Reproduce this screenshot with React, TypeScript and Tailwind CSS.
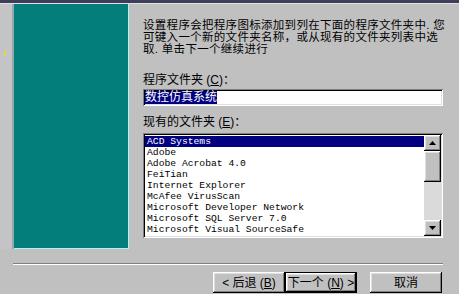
import React from 'react';

const raised =
  'shadow-[inset_-1px_-1px_0_#000,inset_1px_1px_0_#fff,inset_-2px_-2px_0_#808080,inset_2px_2px_0_#dfdfdf]';
const sunken =
  'shadow-[inset_1px_1px_0_#808080,inset_-1px_-1px_0_#fff,inset_2px_2px_0_#000,inset_-2px_-2px_0_#dfdfdf]';

const folders = [
  'ACD Systems',
  'Adobe',
  'Adobe Acrobat 4.0',
  'FeiTian',
  'Internet Explorer',
  'McAfee VirusScan',
  'Microsoft Developer Network',
  'Microsoft SQL Server 7.0',
  'Microsoft Visual SourceSafe',
];

const cjk = { fontFamily: '"Liberation Sans", "Noto Sans CJK SC", sans-serif' };

const Arrow: React.FC<{ up?: boolean }> = ({ up }) => (
  <svg width="7" height="4" viewBox="0 0 7 4">
    <path d={up ? 'M3.5 0 L7 4 L0 4 Z' : 'M0 0 L7 0 L3.5 4 Z'} fill="#000" />
  </svg>
);

const Button: React.FC<{ children: React.ReactNode; isDefault?: boolean; className?: string }> = ({
  children,
  isDefault,
  className = '',
}) => (
  <div className={`${className} w-[72px] h-[21px] ${isDefault ? 'border border-black' : ''}`}>
    <div className={`w-full h-full bg-[#c0c0c0] ${raised} flex items-center justify-center text-[12px] leading-none text-black`}>
      {children}
    </div>
  </div>
);

export default function App() {
  return (
    <div className="w-[459px] h-[294px] bg-[#c0c0c0] overflow-hidden flex flex-col" style={cjk}>
      <div className="h-[3px] bg-[#3d3f58]" />
      <div className="h-[1px] bg-[#dfe0ea]" />

      <div className="flex h-[245px]">
        <div className="w-[14px] border-r-2 border-[#9aa6ae] bg-[#c4c4c6] pt-[47px] pl-[4px]">
          <div className="w-[2px] h-[5px] bg-[#e8d24a]" />
        </div>
        <div className="w-[115px] bg-[#037e7a] border-r border-b border-[#aef3f0]" />

        <div className="w-[314px] pl-[14px] pt-[15px] flex flex-col text-black">
          <div className="text-[11.5px] leading-[12px] tracking-[0.3px] whitespace-nowrap">
            <div className="h-[12px]">设置程序会把程序图标添加到列在下面的程序文件夹中. 您</div>
            <div className="h-[12px]">可键入一个新的文件夹名称，或从现有的文件夹列表中选</div>
            <div className="h-[12px]">取. 单击下一个继续进行</div>
          </div>

          <div className="mt-[19px] text-[12px] leading-[12px]">
            程序文件夹 (<span className="underline">C</span>)：
          </div>
          <div className={`mt-[3px] h-[17px] w-[300px] bg-white ${sunken} flex items-center pl-[2px]`}>
            <span className="bg-[#000080] text-white text-[12px] leading-[13px]">数控仿真系统</span>
          </div>

          <div className="mt-[10px] text-[12px] leading-[12px]">
            现有的文件夹 (<span className="underline">E</span>)：
          </div>
          <div className={`mt-[5px] h-[105px] w-[300px] bg-white ${sunken} p-[2px] flex`}>
            <div
              className="flex-1 flex flex-col pt-[1px] overflow-hidden"
              style={{ fontFamily: '"Liberation Mono", monospace' }}
            >
              {folders.map((f, i) => (
                <div
                  key={f}
                  className={`h-[11px] text-[9.7px] leading-[11px] pl-[2px] whitespace-nowrap ${
                    i === 0 ? 'bg-[#000080] text-white' : 'text-black'
                  }`}
                >
                  {f}
                </div>
              ))}
            </div>
            <div className="w-[17px] flex flex-col">
              <div className={`h-[16px] bg-[#c0c0c0] ${raised} flex items-center justify-center`}>
                <Arrow up />
              </div>
              <div className={`h-[31px] bg-[#c0c0c0] ${raised}`} />
              <div className="flex-1 bg-[#dadada]" />
              <div className={`h-[16px] bg-[#c0c0c0] ${raised} flex items-center justify-center`}>
                <Arrow />
              </div>
            </div>
          </div>
        </div>
      </div>

      <div className="ml-[13px] w-[430px] mt-[14px] h-[2px] border-t border-[#808080] border-b border-b-white" />

      <div className="mt-[7px] flex pl-[213px]">
        <Button>
          &lt; 后退 (<span className="underline">B</span>)
        </Button>
        <Button isDefault>
          下一个 (<span className="underline">N</span>) &gt;
        </Button>
        <Button className="ml-[13px]">取消</Button>
      </div>
    </div>
  );
}
